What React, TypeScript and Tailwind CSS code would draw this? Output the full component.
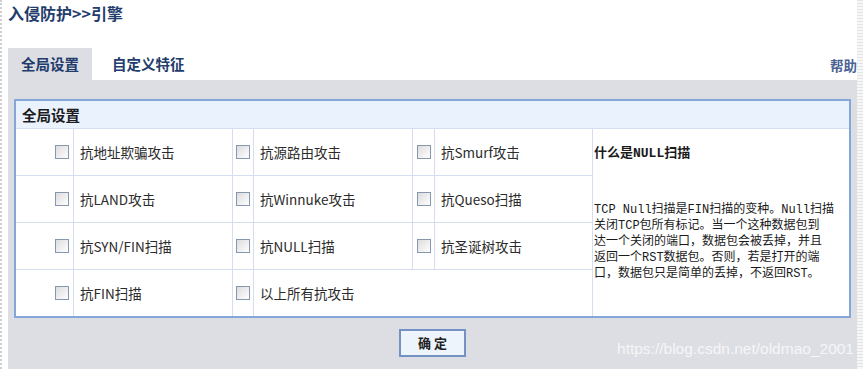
const cjk = { fontFamily: '"Noto Sans CJK SC", "Liberation Sans", sans-serif' };
const mono = { fontFamily: '"Liberation Mono", "Noto Sans CJK SC", monospace' };

const rows: string[][] = [
  ['抗地址欺骗攻击', '抗源路由攻击', '抗Smurf攻击'],
  ['抗LAND攻击', '抗Winnuke攻击', '抗Queso扫描'],
  ['抗SYN/FIN扫描', '抗NULL扫描', '抗圣诞树攻击'],
  ['抗FIN扫描', '以上所有抗攻击'],
];

const helpLines = [
  'TCP Null扫描是FIN扫描的变种。Null扫描',
  '关闭TCP包所有标记。当一个这种数据包到',
  '达一个关闭的端口，数据包会被丢掉，并且',
  '返回一个RST数据包。否则，若是打开的端',
  '口，数据包只是简单的丢掉，不返回RST。',
];

const Box = () => (
  <span className="block h-[14px] w-[14px] border border-[#8797ae] bg-gradient-to-br from-[#dcdcdc] to-white" />
);

const Cell = ({ label, first, wide }: { label: string; first: boolean; wide: boolean }) => (
  <>
    <div className={`flex items-center bg-white ${first ? 'justify-end pr-[4px]' : 'justify-center'}`}>
      <Box />
    </div>
    <div
      className={`flex items-center bg-white pl-[6px] text-[13.5px] text-[#2b2b2b] ${wide ? 'col-span-3' : ''}`}
    >
      {label}
    </div>
  </>
);

export default function App() {
  return (
    <div className="flex h-[369px] w-[863px] overflow-hidden bg-white" style={cjk}>
      <div className="w-[8px] shrink-0 border-l-2 border-dotted border-[#cfcfcf]" />
      <div className="flex w-[849px] shrink-0 flex-col overflow-hidden">
        <div className="h-[48px] pt-[3px] text-[16px] font-bold leading-[20px] text-[#223c6c]">入侵防护&gt;&gt;引擎</div>
        <div className="flex h-[32px] items-center text-[14.5px] font-bold text-[#223c6c]">
          <div className="flex h-full w-[84px] items-center justify-center bg-[#dcdee3]">全局设置</div>
          <div className="ml-[20px]">自定义特征</div>
          <div className="ml-auto mt-[2px] text-[13.5px] text-[#4b6394]">帮助</div>
        </div>
        <div className="relative flex flex-1 flex-col items-center bg-[#dcdee3] px-[6px] pt-[19px]">
          <div className="w-full border-2 border-[#84a6da] bg-[#d4deee]">
            <div className="grid grid-cols-[57px_158px_20px_158px_21px_157px_256px] grid-rows-[27px_46px_46px_46px_46px] gap-px">
              <div className="col-span-7 flex items-center bg-[#eaf2fd] pl-[6px] text-[14.5px] font-bold text-[#1d1d1d]">全局设置</div>
              {rows.map((r, i) => (
                <div key={i} className="contents">
                  {r.map((label, j) => (
                    <Cell key={j} label={label} first={j === 0} wide={r.length === 2 && j === 1} />
                  ))}
                  {i === 0 && (
                    <div className="row-span-4 bg-white pl-px pt-[17px] text-[#1a1a1a]" style={mono}>
                      <div className="text-[13px] font-bold leading-[15px]">什么是NULL扫描</div>
                      <div className="mt-[41px] whitespace-nowrap text-[12px] leading-[16px]">
                        {helpLines.map((l) => (
                          <div key={l}>{l}</div>
                        ))}
                      </div>
                    </div>
                  )}
                </div>
              ))}
            </div>
          </div>
          <button className="mt-[11px] flex h-[28px] w-[67px] items-center justify-center border-2 border-[#7391c2] bg-[#eef4fc] text-[13px] font-bold text-[#222]">
            确&nbsp;定
          </button>
          <div
            className="absolute bottom-[9px] right-[3px] text-[15.5px] text-white/75"
            style={{ fontFamily: '"Liberation Sans", Arial, sans-serif' }}
          >
            https://blog.csdn.net/oldmao_2001
          </div>
        </div>
      </div>
      <div className="w-[6px] shrink-0 bg-[repeating-linear-gradient(to_bottom,#e4e4e4_0px,#e4e4e4_1px,#f7f7f7_1px,#f7f7f7_3px)]" />
    </div>
  );
}
